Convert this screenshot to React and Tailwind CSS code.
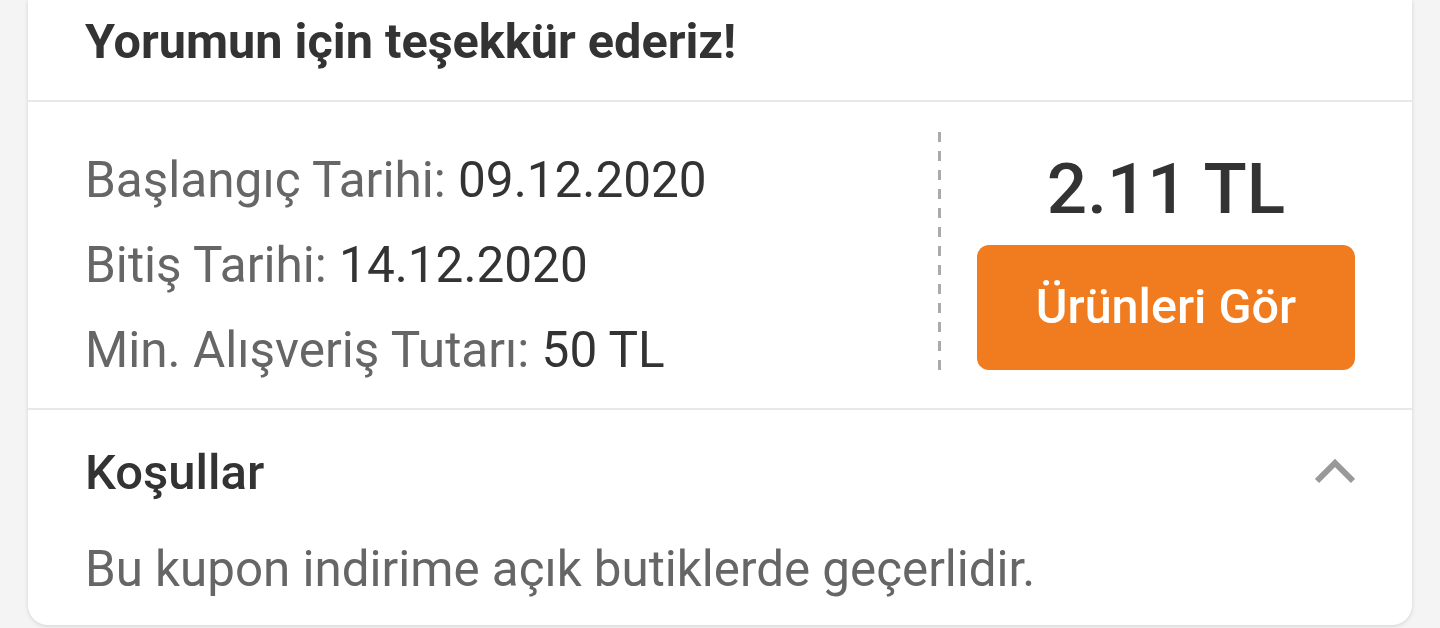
import React from 'react';

function InfoRow({ label, value }) {
  return (
    <div className="h-[56px] leading-[56px] text-[49.5px] whitespace-nowrap">
      <span className="text-[#666]">{label}: </span>
      <span className="text-[#333]">{value}</span>
    </div>
  );
}

function ChevronUp() {
  return (
    <svg width="40" height="26" viewBox="0 0 40 26" fill="none">
      <polyline points="2,23 20,5 38,23" stroke="#999" strokeWidth="6" strokeLinejoin="miter" />
    </svg>
  );
}

export default function App() {
  const rows = [
    { label: 'Başlangıç Tarihi', value: '09.12.2020' },
    { label: 'Bitiş Tarihi', value: '14.12.2020' },
    { label: 'Min. Alışveriş Tutarı', value: '50 TL' },
  ];

  return (
    <div className="min-h-[628px] bg-[#f4f4f4] font-['Roboto',sans-serif]">
      <div className="ml-[28px] w-[1384px] bg-white rounded-b-[20px] shadow-[0_1px_4px_rgba(0,0,0,0.14)]">
        {/* header */}
        <div className="px-[57px] pt-[14px] pb-[30px] border-b-2 border-[#e8e8e8]">
          <h1 className="h-[56px] leading-[56px] text-[48.6px] font-bold text-[#333]">
            Yorumun için teşekkür ederiz!
          </h1>
        </div>

        {/* coupon details */}
        <div className="flex px-[57px] py-[30px] border-b-2 border-[#e8e8e8]">
          <div className="flex-1 flex flex-col gap-[29px] pt-[20px]">
            {rows.map((r) => (
              <InfoRow key={r.label} label={r.label} value={r.value} />
            ))}
          </div>
          <div className="w-[3px] bg-[repeating-linear-gradient(to_bottom,#aaa_0,#aaa_10px,transparent_10px,transparent_19px)]" />
          <div className="w-[414px] pl-[36px] pt-[16px] flex flex-col items-center">
            <div className="h-[82px] leading-[82px] text-[71px] font-medium text-[#333]">2.11 TL</div>
            <button className="mt-[15px] w-[378px] h-[125px] rounded-[12px] bg-[#f07c1f] text-white text-[48.5px] font-medium">
              Ürünleri Gör
            </button>
          </div>
        </div>

        {/* terms */}
        <div className="px-[57px] pt-[35px] pb-[28px]">
          <div className="flex items-center justify-between h-[56px]">
            <span className="leading-[56px] text-[49px] font-medium text-[#333]">Koşullar</span>
            <div className="mt-[-4px]">
              <ChevronUp />
            </div>
          </div>
          <p className="mt-[40px] h-[56px] leading-[56px] text-[49.3px] text-[#666]">
            Bu kupon indirime açık butiklerde geçerlidir.
          </p>
        </div>
      </div>
    </div>
  );
}
